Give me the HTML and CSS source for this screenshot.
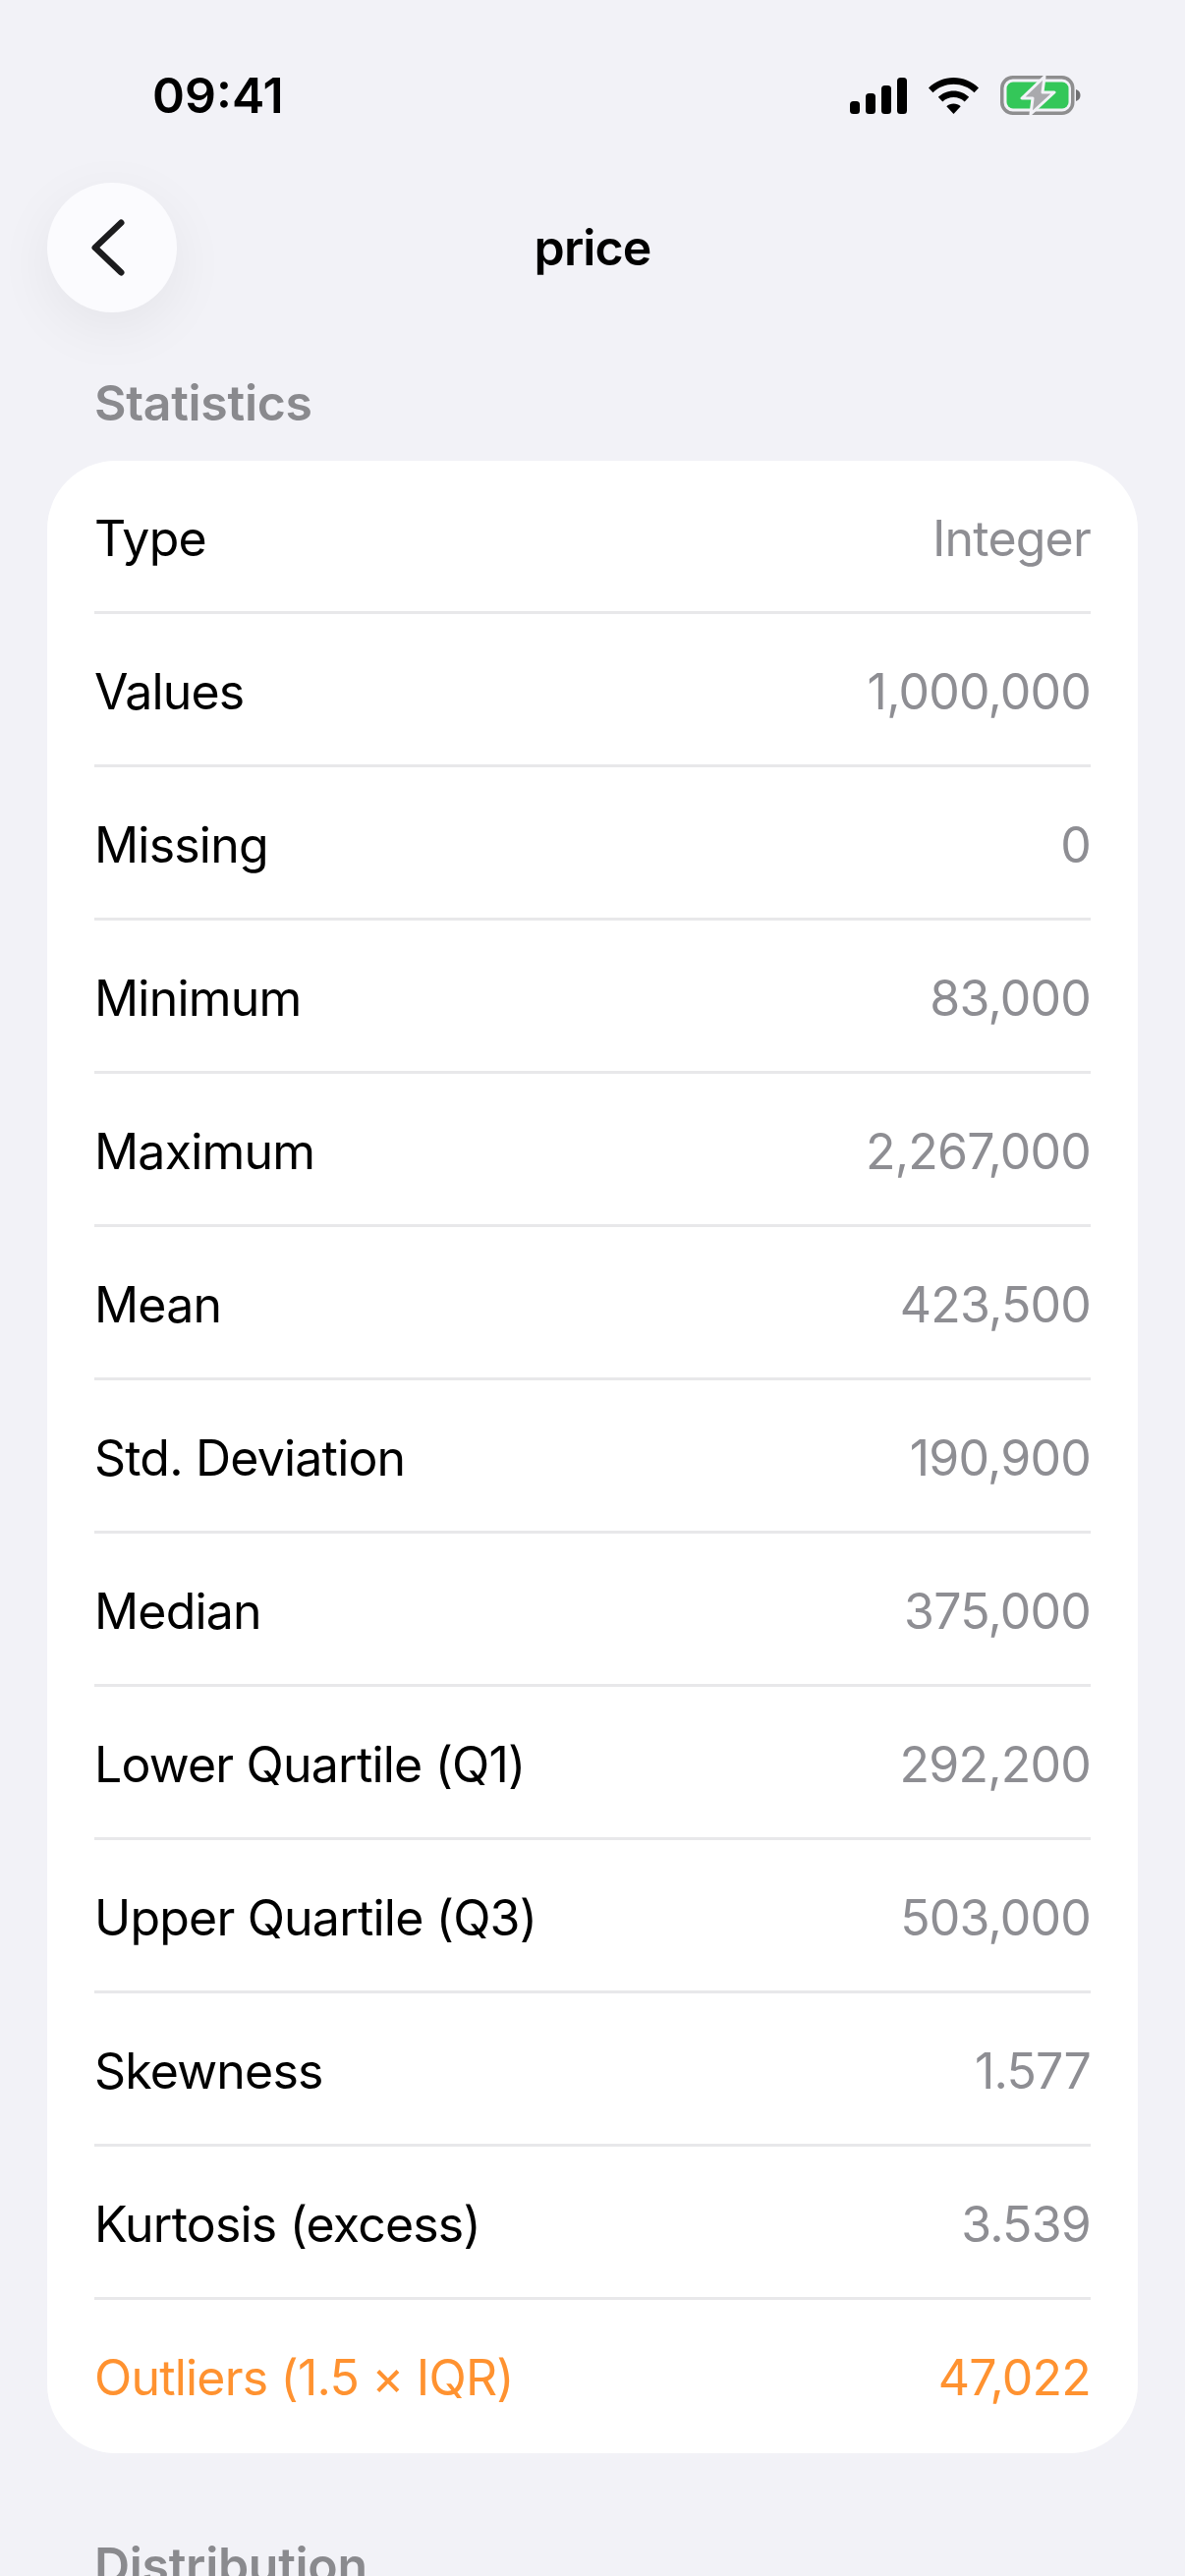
FILE: index.html
```html
<!DOCTYPE html>
<html lang="en">
<head>
<meta charset="utf-8">
<title>price</title>
<link rel="stylesheet" href="styles.css">
</head>
<body>
<div class="screen">
  <div class="status">
    <span class="time">09:41</span>
    <div class="status-icons">
      <svg class="signal" width="58" height="37" viewBox="0 0 58 37"><rect x="0" y="24" width="10" height="13" rx="3.5"/><rect x="16" y="16" width="10" height="21" rx="3.5"/><rect x="32" y="8" width="10" height="29" rx="3.5"/><rect x="48" y="0" width="10" height="37" rx="3.5"/></svg>
      <svg class="wifi" width="51" height="37" viewBox="0 0 51 37"><path d="M25.5 0C35 0 44 3.700 51 10.500L46.500 15.200C40.800 9.800 33.400 6.800 25.500 6.800S10.200 9.800 4.500 15.200L0 10.500C7 3.700 16 0 25.500 0Z"/><path d="M25.500 13.500C31.500 13.500 37 15.800 41.200 19.800L36.700 24.400C33.700 21.600 29.800 20 25.500 20S17.300 21.600 14.300 24.400L9.800 19.800C14 15.800 19.500 13.500 25.500 13.500Z"/><path d="M25.500 26.500C28.200 26.500 30.700 27.500 32.700 29.300L25.500 37L18.300 29.300C20.300 27.500 22.800 26.500 25.500 26.500Z"/></svg>
      <svg class="battery" width="82" height="40" viewBox="0 0 82 40"><rect x="1.750" y="1.750" width="72" height="36.500" rx="11" fill="none" stroke="#8e8e8f" stroke-width="3.500"/><rect x="6.500" y="6.500" width="63" height="27" rx="6.500" fill="#34c759"/><path d="M77 14C80 15 81.500 17 81.500 20S80 25 77 26Z" fill="#6f6f72"/><path d="M45 1L22 23H33L31 39L55 17H43Z" fill="#a9a9ad" stroke="#f2f2f7" stroke-width="3" stroke-linejoin="round"/></svg>
    </div>
  </div>
  <header class="nav">
    <button class="back" type="button" aria-label="Back">
      <svg width="36" height="60" viewBox="0 0 36 60"><path d="M31.250 4.750L4.750 30L31.250 55.250" fill="none" stroke="#1c1c1e" stroke-width="6.500" stroke-linecap="round" stroke-linejoin="round"/></svg>
    </button>
    <h1 class="title">price</h1>
  </header>
  <h2 class="section">Statistics</h2>
  <section class="card">
    <div class="row"><span>Type</span><span class="val">Integer</span></div>
    <div class="row"><span>Values</span><span class="val">1,000,000</span></div>
    <div class="row"><span>Missing</span><span class="val">0</span></div>
    <div class="row"><span>Minimum</span><span class="val">83,000</span></div>
    <div class="row"><span>Maximum</span><span class="val">2,267,000</span></div>
    <div class="row"><span>Mean</span><span class="val">423,500</span></div>
    <div class="row"><span>Std. Deviation</span><span class="val">190,900</span></div>
    <div class="row"><span>Median</span><span class="val">375,000</span></div>
    <div class="row"><span>Lower Quartile (Q1)</span><span class="val">292,200</span></div>
    <div class="row"><span>Upper Quartile (Q3)</span><span class="val">503,000</span></div>
    <div class="row"><span>Skewness</span><span class="val">1.577</span></div>
    <div class="row"><span>Kurtosis (excess)</span><span class="val">3.539</span></div>
    <div class="row warn"><span>Outliers (1.5 × IQR)</span><span>47,022</span></div>
  </section>
  <h2 class="section next">Distribution</h2>
</div>
</body>
</html>
```
FILE: styles.css
```css
* { box-sizing: border-box; }
html, body { margin: 0; padding: 0; height: 2622px; overflow: hidden; background: #f2f2f7; }
body { font-family: Inter, "Liberation Sans", sans-serif; color: #000; }
.screen { display: flex; flex-direction: column; height: 2622px; overflow: hidden; padding: 0 48px; }
.status { display: flex; justify-content: space-between; align-items: center; height: 78px; margin-top: 58px; flex: none; padding: 0 0 0 107px; }
.time { font-size: 50px; font-weight: 600; line-height: 78px; }
.status-icons { display: flex; align-items: center; gap: 22px; margin-right: 58px; }
.status-icons svg { display: block; flex: none; }
.nav { position: relative; display: flex; align-items: center; justify-content: center; height: 132px; margin-top: 50px; flex: none; }
.back { position: absolute; left: 0; top: 0; width: 132px; height: 132px; border: 0; padding: 0; border-radius: 50%; background: #fbfbfe; box-shadow: 0 16px 60px rgba(0,0,0,.06); display: flex; align-items: center; justify-content: center; }
.back svg { display: block; margin-right: 9px; }
.title { margin: 0; font-size: 50px; font-weight: 600; line-height: 60px; letter-spacing: -.9px; }
.section { margin: 62px 0 0 48px; font-size: 50px; font-weight: 600; line-height: 60px; color: #8a8a8e; letter-spacing: -.3px; flex: none; }
.section.next { margin-top: 84px; }
.card { flex: none; margin-top: 29px; background: #fff; border-radius: 70px; padding: 0 48px; }
.row { display: flex; justify-content: space-between; align-items: center; height: 156px; padding-top: 4px; font-size: 50px; letter-spacing: -.8px; border-bottom: 3px solid #e8e8ea; }
.row:last-child { border-bottom: 0; padding-top: 1px; }
.val { color: #8e8e93; }
.warn { color: #ff9230; }
```
